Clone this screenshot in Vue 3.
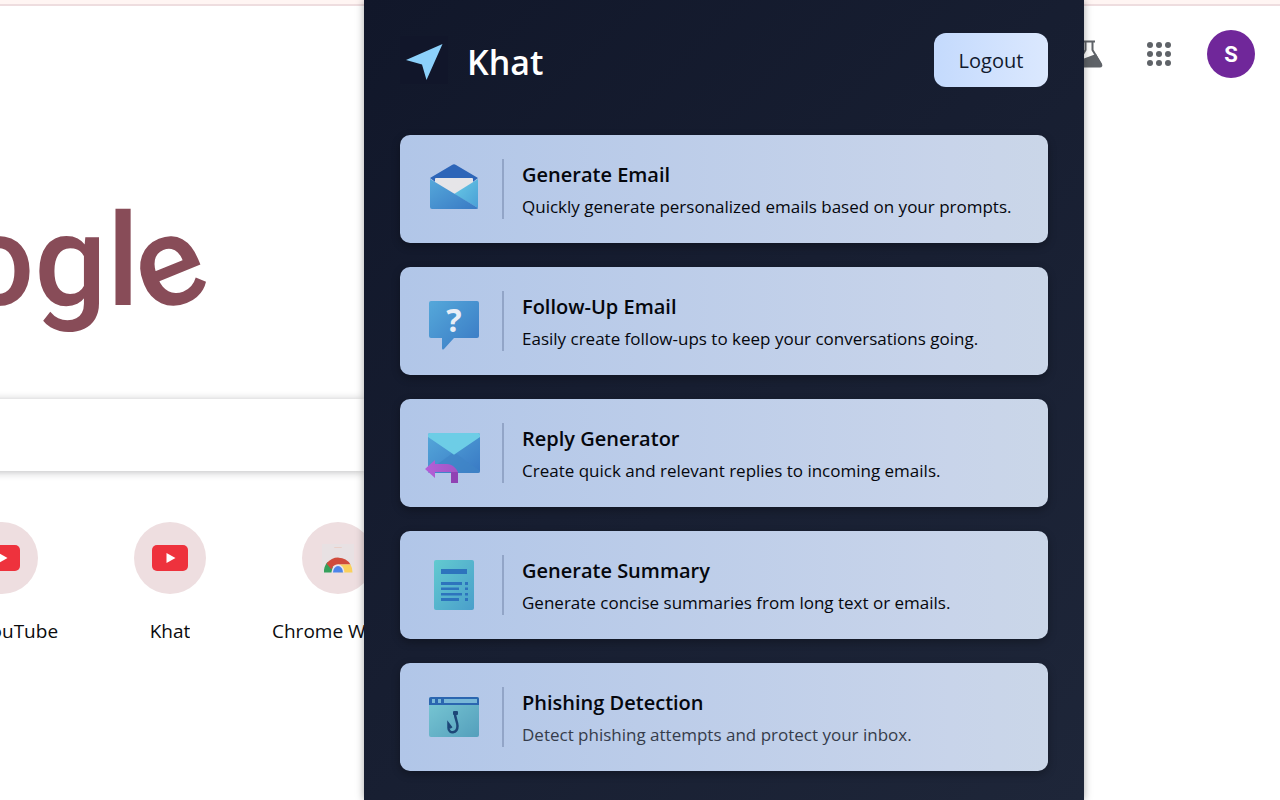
<script setup>
const shortcuts = [
  { name: 'YouTube', icon: 'video', shifted: true },
  { name: 'Khat', icon: 'video' },
  { name: 'Chrome Web Store', icon: 'store' },
]
const actions = [
  { id: 'email', title: 'Generate Email', text: 'Quickly generate personalized emails based on your prompts.' },
  { id: 'follow', title: 'Follow-Up Email', text: 'Easily create follow-ups to keep your conversations going.' },
  { id: 'reply', title: 'Reply Generator', text: 'Create quick and relevant replies to incoming emails.' },
  { id: 'summary', title: 'Generate Summary', text: 'Generate concise summaries from long text or emails.' },
  { id: 'phishing', title: 'Phishing Detection', text: 'Detect phishing attempts and protect your inbox.', faded: true },
]
</script>

<template>
  <div class="page">
    <main class="tab">
      <div class="brand">Googl<span class="tilt">e</span></div>
      <input class="search" type="text" aria-label="Search" />
      <nav class="shortcuts">
        <a v-for="s in shortcuts" :key="s.name" class="shortcut" href="#">
          <span class="disc">
            <svg v-if="s.icon === 'video'" width="36" height="36" viewBox="0 0 36 36">
              <rect x="0" y="5" width="36" height="26" rx="5" fill="#ee323d" />
              <path d="M14.500 13v10l9-5z" fill="#fff" />
            </svg>
            <svg v-else width="36" height="36" viewBox="0 0 36 36">
              <path d="M2 4h32v29H2z" fill="#e8e1e3" />
              <rect x="14" y="7" width="8" height="1" rx="1" fill="#e9cfc8" />
              <path d="M4 32.500A14.500 14.500 0 0 1 7.500 22l6 6-2 4.500z" fill="#35a05b" />
              <path d="M6.500 23.500A14.500 14.500 0 0 1 30.500 24.500H18a7 7 0 0 0-6.500 5z" fill="#d04b3c" />
              <path d="M18 24.500h12.500a15 15 0 0 1 2 8H18z" fill="#fbd05c" />
              <path d="M11.500 32.500a6.500 8 0 0 1 13 0z" fill="#e9e4ee" />
              <path d="M13 32.500a5 6.500 0 0 1 10 0z" fill="#4d84ea" />
            </svg>
          </span>
          <span class="label" :class="{ shifted: s.shifted }">{{ s.name }}</span>
        </a>
      </nav>
    </main>

    <section class="popup">
      <header class="head">
        <svg class="plane" width="48" height="48" viewBox="0 0 48 48" aria-hidden="true">
          <rect width="48" height="48" fill="#11162a" />
          <path d="M42.500 8 6 24l16 4.500L26.500 44z" fill="#8cd1fb" />
        </svg>
        <h1>Khat</h1>
        <button class="logout" type="button">Logout</button>
      </header>
      <button v-for="a in actions" :key="a.id" class="card" type="button">
        <svg class="pic" width="60" height="60" viewBox="0 0 60 60" aria-hidden="true">
          <defs>
            <linearGradient id="blue" x1="0" y1="0" x2="1" y2="1"><stop offset="0" stop-color="#55a8da" /><stop offset="1" stop-color="#3979c4" /></linearGradient>
            <linearGradient id="sky" x1="0" y1="0" x2="1" y2="1"><stop offset="0" stop-color="#69cbe6" /><stop offset="1" stop-color="#4a9fd6" /></linearGradient>
            <linearGradient id="teal" x1="0" y1="0" x2="1" y2="1"><stop offset="0" stop-color="#62cad0" /><stop offset="1" stop-color="#4a9fcb" /></linearGradient>
            <linearGradient id="pane" x1="0" y1="0" x2="1" y2="1"><stop offset="0" stop-color="#79c8d4" /><stop offset="1" stop-color="#549fbc" /></linearGradient>
            <linearGradient id="violet" x1="0" y1="0" x2="1" y2="0"><stop offset="0" stop-color="#b45fd8" /><stop offset="1" stop-color="#a156c5" /></linearGradient>
          </defs>
          <template v-if="a.id === 'email'">
            <path d="M6 19 28 6q2-1.500 4 0l22 13-24 18z" fill="#2d65b8" />
            <path d="M11 20q0-1 1-1h36q1 0 1 1v5L30 37 11 25z" fill="#e6e5e8" />
            <path d="M54 20v29L30 35z" fill="url(#sky)" />
            <path d="M6 20 54 49q0 1-2 1H8q-2 0-2-2z" fill="url(#blue)" />
          </template>
          <template v-else-if="a.id === 'follow'">
            <path d="M7 10h46q2 0 2 2v33q0 2-2 2H30L20 58q-2 1.500-2-1V47H7q-2 0-2-2V12q0-2 2-2z" fill="url(#blue)" />
            <text x="30" y="41" text-anchor="middle" class="mark">?</text>
          </template>
          <template v-else-if="a.id === 'reply'">
            <rect x="4" y="10" width="52" height="40" rx="2" fill="url(#blue)" />
            <path d="M30 29 56 48q0 2-2 2H6q-2 0-2-2z" fill="#3f84c6" opacity=".65" />
            <path d="M4 14v-2q0-2 2-2h48q2 0 2 2v2L31 31q-1 1-2 0z" fill="#6dcde6" />
            <path d="M27 49h7v11h-7z" fill="#9042b4" />
            <path d="M1 46 11 37v4h12c5 0 9 4 11 8H11v6z" fill="url(#violet)" />
          </template>
          <template v-else-if="a.id === 'summary'">
            <rect x="10" y="5" width="40" height="50" rx="2" fill="url(#teal)" />
            <path d="M17 14h26v5H17zM17 27h21v3H17zM41 27h3v3h-3zM17 32.500h18v2.500H17zM41 32.500h3v2.500h-3zM17 38h21v2.500H17zM41 38h3v2.500h-3zM17 43h18v3H17zM41 43h3v3h-3z" fill="#2d74bd" />
          </template>
          <template v-else>
            <rect x="5" y="10" width="50" height="40" rx="2" fill="url(#pane)" />
            <path d="M5 18v-6q0-2 2-2h46q2 0 2 2v6z" fill="#2b66b0" />
            <path d="M8 12h3v4H8zM14 12h3v4h-3zM20 12h33v4H20z" fill="#78b7d8" />
            <path d="M31 27c0 4 2.500 8 2.500 12 0 8-9 8-9 2v-4l3 4" fill="none" stroke="#1d4778" stroke-width="2.500" />
            <rect x="29" y="24" width="5" height="4" rx="1" fill="#1d4778" />
          </template>
        </svg>
        <span class="copy" :class="{ faded: a.faded }">
          <strong>{{ a.title }}</strong>
          <span class="desc">{{ a.text }}</span>
        </span>
      </button>
    </section>

    <aside class="tools">
      <svg class="flask" width="28" height="28" viewBox="0 0 28 28" aria-hidden="true">
        <path d="M8 1.500h12M10.500 2v8L2 24q-1 2.500 1 2.500h22q2 0 1-2.500L17.500 10V2" fill="none" stroke="#5f6368" stroke-width="2" />
        <path d="M5 20l16-6 6 11-2 2H2z" fill="#5f6368" />
      </svg>
      <button class="apps" type="button" aria-label="Apps"><i v-for="n in 9" :key="n"></i></button>
      <button class="avatar" type="button">S</button>
    </aside>
  </div>
</template>

<style>
body { background: #fff; }
</style>

<style scoped>
* { box-sizing: border-box; }
button { border: 0; padding: 0; cursor: pointer; font-family: inherit; }
.page {
  display: flex;
  min-height: 100vh;
  overflow: hidden;
  font-family: "Open Sans", "Noto Sans", sans-serif;
  background: linear-gradient(#fff5f3 0 4px, #eedddf 4px 6px, #fff 6px);
}
.tab {
  flex: 1;
  min-width: 0;
  overflow: hidden;
  display: flex;
  flex-direction: column;
  padding-top: 181px;
}
.brand {
  align-self: flex-end;
  padding-right: 156px;
  white-space: nowrap;
  font: 500 128px/160px Roboto, sans-serif;
  color: #884c58;
}
.tilt { display: inline-block; transform: rotate(-22deg); transform-origin: 50% 61%; }
.search {
  align-self: flex-end;
  margin-top: 58px;
  height: 72px;
  width: 110%;
  border: 0;
  background: #fff;
  box-shadow: 0 1px 8px rgba(32, 33, 36, .3);
}
.shortcuts { display: flex; margin: 51px 0 0 -82px; }
.shortcut {
  flex: 0 0 168px;
  display: flex;
  flex-direction: column;
  align-items: center;
  gap: 24px;
  color: #0b0b0d;
  text-decoration: none;
}
.disc {
  display: grid;
  place-items: center;
  width: 72px;
  height: 72px;
  border-radius: 50%;
  background: #eedee0;
}
.label {
  max-width: 132px;
  overflow: hidden;
  text-overflow: ellipsis;
  white-space: nowrap;
  font-size: 19px;
  line-height: 26px;
}
.shifted { padding-left: 34px; }
.popup {
  flex: 0 1 720px;
  position: relative;
  display: flex;
  flex-direction: column;
  gap: 24px;
  padding: 33px 36px 29px;
  background: linear-gradient(135deg, #11172a, #1e2639);
  box-shadow: 0 0 8px rgba(0, 0, 0, .35);
}
.head { display: flex; align-items: center; margin-bottom: 24px; }
h1 {
  flex: 1;
  margin: 4px 0 0 19px;
  font-size: 34px;
  line-height: 48px;
  font-weight: 600;
  color: #fff;
}
.logout {
  width: 114px;
  height: 54px;
  border-radius: 12px;
  font-size: 20px;
  color: #111a2e;
  background: linear-gradient(90deg, #c4dafd, #dbe8fe);
}
.card {
  display: flex;
  align-items: center;
  padding: 24px;
  border-radius: 10px;
  text-align: left;
  color: #05070d;
  background: linear-gradient(90deg, #b1c6e8, #c8d4ea 85%, #cad6e8);
  box-shadow: 0 3px 8px rgba(0, 0, 0, .3);
}
.pic { flex: none; }
.mark { font: 700 32px "Noto Sans", sans-serif; fill: #e9eef6; }
.copy {
  flex: 1;
  display: flex;
  flex-direction: column;
  gap: 4px;
  height: 60px;
  margin-left: 18px;
  padding-left: 18px;
  border-left: 2px solid #92a5c7;
}
.copy strong { font-size: 20px; line-height: 32px; font-weight: 600; }
.desc { font-size: 17px; line-height: 24px; }
.faded .desc { color: #353c4b; }
.tools {
  flex: 0 0 196px;
  min-width: 0;
  overflow: hidden;
  display: flex;
  align-items: center;
  justify-content: flex-end;
  height: 48px;
  margin-top: 30px;
  padding-right: 25px;
}
.flask { flex: none; margin-right: 44px; }
.apps {
  display: grid;
  grid-template-columns: repeat(3, 6px);
  gap: 3px;
  margin-right: 36px;
  background: none;
}
.apps i { height: 6px; border-radius: 50%; background: #5f6368; }
.avatar {
  flex: none;
  width: 48px;
  height: 48px;
  border-radius: 50%;
  background: #70279a;
  color: #fff;
  font: 700 22px Roboto, sans-serif;
}
</style>
